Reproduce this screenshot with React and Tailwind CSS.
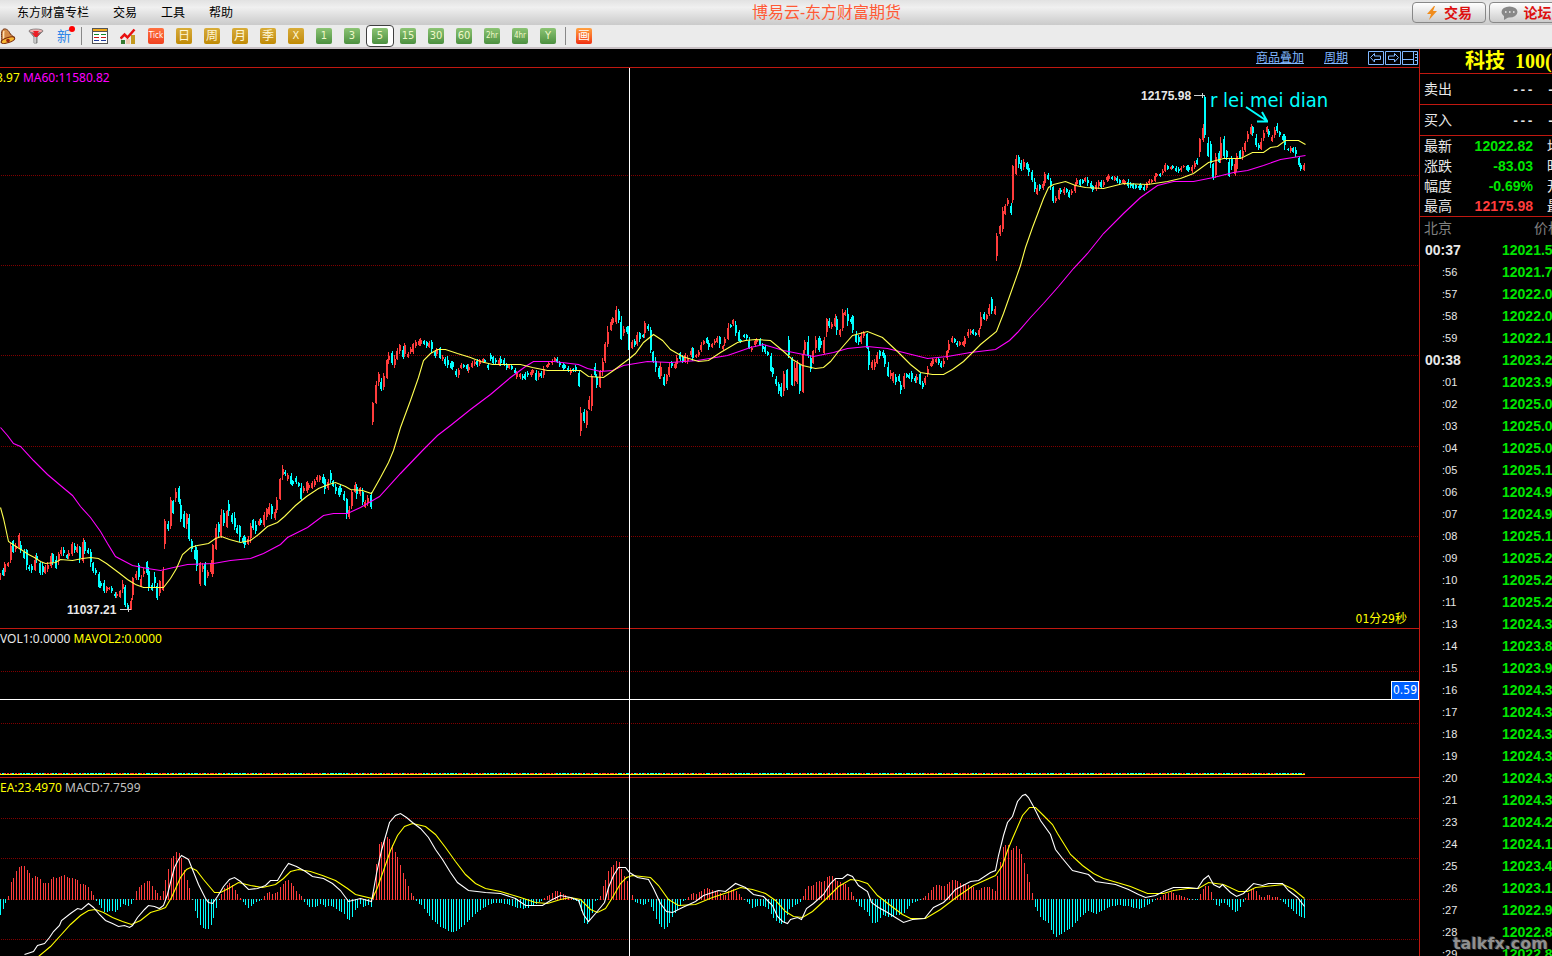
// Futures trading screen: menu, period toolbar, K-line chart with volume and MACD, quote sidebar.

import { useState } from "react";

const UP = "#ff3c3c";
const DOWN = "#00ffff";

// Each pair is where a candle starts and where it ends, in chart pixels. A smaller second value is a rising candle.
const SESSIONS = [
    "583,572 568,576 576,562 567,562 563,543 540,553 552,543 549,533 541,553 549,559 549,570 565,571 564,573 571,555 553,563 562,575 562,575 574,565 572,562 568,553 553,565 556,569 565,552 556,547 547,556 554,559 559,550 556,542 543,553 553,544 546,563 563,538 540,554 548,554 549,567 562,573 568,575 572,588 581,588 580,593 593,586 590,587 586,593 592,598 598,592 598,590 593,580 585,607 603,610 610,598 600,577 580,571 563,580 587,575 577,568 561,575 567,591 583,591 572,588 583,600 596,580 591,567",
    "549,519 521,531 529,497 500,514 502,488 486,504 499,522 511,528 529,513 514,541 539,552 545,560 547,571 586,562 572,563 562,586 578,570 574,560 577,544 550,524 522,537 538,509 510,526 528,510 500,516 513,524 512,530 525,534 525,542 536,544 535,548 545,536 543,523 519,530 521,534 526,519 518,525 527,512 520,508 515,503 504,519 520,509 513,497 500,478 480,465 470,476 481,473 473,485 480,486 476,484 482,487 483,500 493,486 493,481 490,483 489,481 487,479 482,475 482,475 474,484 477,494 490,479 470,483 480,487 484,494 486,497 485,495 491,501 498,519 519,506 509,490 493,482 484,499 496,487 488,505 508,500 506,495 492,509",
    "425,402 404,381 386,372 378,391 390,373 379,359 364,352 351,365 368,355 360,348 354,344 346,359 357,343 358,352 354,347 354,343 348,340 346,339 346,338 340,345 341,348 348,341 340,353 350,358 356,348 347,359 361,355 357,366 356,368 361,369 361,370 369,377 378,368 369,363 364,368 364,371 373,364 368,361 366,360 359,367 366,359 363,358 359,363 363,370 353,361 356,364 358,364 366,358 356,366 358,366 363,370 369,364 365,370 368,374 379,371 379,373 374,380 372,380 371,377 377,370 375,369 370,381 380,371 371,378 378,366 368,364 367,361 365,359 362,357 357,363 361,367 363,370 364,369 366,372 375,368 368,372 365,372 371,387",
    "436,407 409,423 428,410 410,396 411,374 363,377 374,388 388,370 376,358 363,342 347,326 331,319 325,317 324,306 309,323 316,340 336,326 326,334 326,350 349,340 339,347 346,332 332,342 334,338 338,321 324,331 327,353 351,363 357,372 366,379 379,362 374,386 384,374 377,363 361,368 369,362 368,355 352,361 355,363 363,353 364,355 357,348 347,361 358,354 357,350 352,342 345,340 337,344 340,350 348,343 345,339 343,336 336,348 350,345 346,337 340,323 324,328 326,319 321,336 330,342 339,343 334,338 334,340 337,349 352,346 347,339 344,338 338,346 343,352 345,354 351,356 353,372 367,377 376,386 382,394 383,397 396,371 369,390",
    "336,358 357,386 386,362 384,360 364,394 393,350 354,340 336,358 355,372 364,350 353,336 336,352 338,348 354,337 337,318 318,328 329,322 327,314 316,335 337,329 331,309 316,310 308,326 317,324 315,333 331,343 335,345 344,332 338,331 333,349 347,370 370,360 370,359 364,352 350,359 350,358 353,367 362,377 379,370 383,372 374,385 374,382 381,394 389,373 373,378 373,379 371,382 376,383 383,374 373,385 381,389 385,376 377,366 367,361 366,358 363,358 357,365 361,368 367,358 360,350 353,340 343,336 338,343 341,347 346,341 346,341 347,336 338,329 335,329 329,335 332,336 337,328 329,312 312,320 321,314 316,304 297,314 315,306",
    "261,233 236,225 232,207 215,204 206,198 203,215 203,165 175,155 155,168 160,171 170,159 162,170 164,176 170,182 178,192 195,185 184,191 190,181 186,172 173,180 178,190 186,203 203,196 200,188 188,194 195,187 188,193 190,198 195,189 193,182 186,178 179,186 179,184 182,177 177,186 181,189 185,192 191,182 189,180 180,188 187,180 182,176 181,174 176,180 181,176 176,183 179,184 184,179 185,180 179,188 182,188 183,189 184,189 184,190 183,190 185,191 190,182 185,179 183,179 182,173 177,173 173,177 175,169 172,163 165,170 170,166 165,169 166,172 167,173 172,166 168,165 165,171 165,172 173,165 169,161 158,165 157,138 142,124 95,138 137,157 141,168 163,180 178,153 151,163 163,137 136,158 150,160 158,177 156,170 176,159 172,153 150,159 160,147 152,141 142,131 135,124 126,136 134,147 143,150 150,138 141,130 134,126 129,137 142,135 138,127 123,133 131,137 134,141 134,150 148,151 153,146 147,153 147,157 156,167 163,171 171,163",
];

const MA20 =
    "0,507 3,518 5,527 8,541 14,545 22,550 28,554 34,557 40,561 45,563 55,562 60,559 72,560 82,558 90,557 98,558 106,563 118,572 127,579 135,584 143,587 163,587 170,578 176,568 182,554 190,547 197,545 208,543 215,538 221,536 229,539 240,542 250,540 258,534 267,526 277,522 284,516 295,505 306,496 318,488 328,484 335,482 345,486 350,489 362,490 371,493 380,477 388,462 393,450 400,427 410,400 418,377 423,360 430,353 437,349 445,349 457,353 470,357 480,361 492,364 507,364 520,364 532,367 547,370 580,370 588,376 603,377 613,370 629,358 635,353 643,342 653,334 662,340 670,349 682,356 698,361 708,360 720,352 737,342 745,340 755,339 770,340 782,350 792,359 802,365 815,368 823,367 830,361 838,351 852,335 867,331 882,337 897,351 910,364 920,372 932,374 943,374 952,369 963,361 980,344 996,331 1003,313 1009,296 1020,265 1025,247 1032,227 1043,198 1048,187 1053,184 1065,181 1075,185 1085,187 1103,188 1123,183 1147,184 1167,181 1180,178 1193,173 1208,162 1223,158 1240,158 1252,152 1263,152 1270,147 1277,146 1285,140 1298,140 1305,144";

const MA60 =
    "0,427 7,435 13,443 20,446 33,460 47,474 60,485 72,495 80,506 90,517 100,531 107,543 115,556 132,565 147,568 160,570 173,567 187,564 213,563 230,560 250,558 263,553 280,544 287,537 307,527 323,515 333,513 347,513 360,507 379,496 400,473 422,450 437,435 450,425 470,409 490,394 510,377 525,366 533,361 553,361 578,364 587,368 600,371 612,370 623,365 647,361 670,362 697,360 727,355 750,347 763,344 773,347 783,350 813,356 833,352 847,348 867,346 887,348 907,353 927,358 947,356 970,352 995,349 1009,340 1017,332 1030,317 1043,303 1058,286 1073,268 1087,253 1103,233 1123,213 1140,197 1157,185 1173,181 1193,181 1213,177 1233,172 1247,170 1263,165 1280,159 1305,155";

const DIF =
    "24,954 33,951 37,945 44,943 49,937 53,931 59,925 61,920 70,913 77,908 81,909 88,903 93,907 99,914 105,920 112,923 118,926 124,925 129,927 132,925 137,917 144,909 148,905 154,906 159,908 163,905 167,894 171,878 174,867 178,859 181,855 188,859 192,869 198,884 205,898 208,902 212,903 217,896 223,886 229,879 234,877 240,881 248,889 257,888 265,885 270,880 277,880 283,870 288,863 296,866 305,871 312,876 323,878 332,883 340,890 348,901 360,898 371,901 376,873 381,850 385,836 389,822 395,815 400,813 406,817 412,822 420,828 428,837 435,849 442,859 450,872 457,882 468,890 485,892 500,893 515,898 525,905 542,905 550,900 560,895 570,897 578,900 583,914 588,921 595,913 600,907 604,902 608,887 613,875 618,867 625,867 629,872 637,877 648,879 653,888 660,903 666,911 672,912 682,907 695,901 703,895 718,890 725,891 735,883 745,887 753,894 763,896 772,905 777,916 782,921 787,923 790,919 797,917 801,919 806,908 813,903 823,894 830,883 835,878 842,878 847,874 852,876 858,885 867,891 871,902 878,907 887,912 895,917 903,922 912,919 924,918 933,907 943,902 947,898 955,889 970,881 978,880 990,872 995,870 998,855 1003,835 1007,822 1012,816 1017,801 1022,795 1025,794 1028,797 1033,806 1040,820 1050,834 1055,849 1062,858 1072,870 1088,874 1095,881 1115,884 1128,889 1138,894 1145,897 1155,895 1163,891 1173,887 1188,887 1197,888 1203,879 1208,875 1213,884 1219,887 1222,884 1230,892 1236,896 1243,893 1253,883 1262,885 1268,883 1282,883 1288,890 1297,897 1304,906";

const DEA =
    "38,956 50,946 60,935 70,924 80,915 88,910 95,909 103,912 112,917 122,921 131,924 140,920 150,912 160,909 165,907 171,897 180,877 186,869 190,867 196,870 203,879 214,892 220,892 228,888 238,882 250,885 262,887 275,884 283,878 290,871 298,869 310,871 322,875 335,880 347,888 355,894 372,898 377,887 383,870 390,850 397,835 404,826 412,823 425,826 435,834 445,847 455,861 465,874 475,883 485,888 500,891 520,897 535,902 547,903 560,899 570,897 580,899 590,909 597,912 605,908 612,897 620,883 626,877 632,875 650,877 658,885 668,899 678,905 695,904 712,897 730,891 740,887 752,889 765,893 775,900 785,911 793,916 802,917 812,911 825,899 838,886 850,879 858,880 867,883 877,895 890,905 902,914 910,918 925,918 940,909 957,896 973,885 995,875 1002,865 1007,850 1012,838 1022,815 1029,807 1035,807 1043,815 1052,824 1057,833 1070,854 1082,865 1093,873 1103,878 1130,886 1147,893 1163,893 1173,890 1187,888 1198,888 1208,882 1223,884 1238,891 1247,891 1255,887 1283,884 1293,889 1304,898";

// MACD histogram: x and bar height, positive is above the zero line
const MACD_BARS =
    "0,-15 3,-9 6,0 9,5 11,17 16,28 20,33 24,33 29,26 32,21 35,23 38,22 43,16 48,16 53,22 57,21 62,24 65,24 70,20 73,21 77,19 81,13 83,15 88,12 92,6 94,1 97,-2 102,-10 105,-13 110,-10 116,-12 118,-9 123,-4 128,-6 132,-3 134,3 137,10 142,15 148,19 153,12 158,4 161,3 163,8 166,24 168,30 171,41 174,44 177,48 180,45 182,37 185,25 187,19 190,7 193,-3 198,-22 201,-26 206,-30 209,-28 211,-25 217,-5 220,3 223,10 229,16 233,13 237,5 241,0 246,-6 248,-8 252,-5 257,-1 262,0 265,4 269,7 273,4 277,7 281,13 286,19 289,19 292,14 297,7 302,2 305,-4 309,-7 315,-7 321,-4 325,-7 331,-6 337,-10 342,-13 345,-15 347,-19 350,-20 353,-15 355,-10 360,-4 363,-7 367,-5 372,-7 374,20 377,43 379,55 382,58 384,60 387,62 390,59 393,52 400,34 406,17 412,4 416,-1 423,-7 430,-18 440,-27 448,-31 452,-32 457,-31 460,-28 467,-22 477,-12 487,-6 493,-3 500,-3 507,-4 517,-8 523,-9 530,-7 537,-3 543,0 550,5 555,8 560,7 568,2 573,0 579,-3 582,-15 584,-23 587,-24 591,-17 593,-9 595,-1 598,0 601,5 603,13 608,28 612,33 616,38 619,37 622,27 625,21 628,16 630,8 633,2 635,-2 643,-5 649,-2 652,-9 657,-21 662,-28 665,-30 668,-25 672,-17 678,-9 683,-1 687,1 692,6 697,5 702,9 707,11 713,8 718,8 724,3 728,8 733,10 737,7 741,2 747,-2 752,-8 757,-6 763,-6 768,-9 773,-18 777,-22 782,-25 785,-22 789,-9 795,-5 801,-2 803,3 806,13 812,13 817,18 823,17 828,23 833,23 838,17 843,16 847,14 851,7 854,1 857,-4 862,-8 867,-12 872,-23 876,-23 883,-15 890,-18 895,-15 900,-15 905,-12 910,-4 917,-1 923,1 930,8 935,14 945,13 953,20 962,15 972,13 977,8 983,12 990,12 995,8 998,30 1001,40 1003,52 1006,55 1008,54 1011,49 1014,52 1017,53 1020,48 1025,33 1030,13 1033,3 1035,-7 1041,-19 1048,-23 1053,-34 1056,-37 1062,-33 1072,-27 1080,-17 1088,-11 1095,-14 1102,-11 1110,-7 1117,-5 1127,-6 1138,-9 1145,-7 1153,-1 1162,3 1170,7 1177,4 1185,2 1190,0 1198,0 1201,7 1206,14 1209,13 1212,4 1214,-4 1219,-6 1222,-1 1227,-5 1233,-11 1236,-13 1241,-5 1243,-2 1246,3 1252,11 1255,9 1262,1 1268,5 1273,1 1276,3 1282,-1 1286,-5 1293,-11 1298,-16 1302,-18 1305,-18";

const parsePairs = (text) => text.split(" ").map((pair) => pair.split(",").map(Number));

const STEP = 8 / 3;
const candles = SESSIONS.flatMap(parsePairs).map(([start, end], i) => {
    const high = Math.min(start, end);
    const low = Math.max(start, end);
    const limit = Math.floor((low - high) * 0.35);
    return {
        x: Math.round(i * STEP - 1),
        high,
        low,
        bodyTop: high + Math.min([1, 4, 2, 6, 3][i % 5], limit),
        bodyBottom: low - Math.min([3, 1, 5, 2][i % 4], limit),
        color: end < start ? UP : DOWN,
    };
});

const barPoints = parsePairs(MACD_BARS);

function barHeight(x) {
    const next = barPoints.findIndex((p) => p[0] >= x);
    if (next <= 0) return next === 0 ? barPoints[0][1] : barPoints[barPoints.length - 1][1];
    const [x0, y0] = barPoints[next - 1];
    const [x1, y1] = barPoints[next];
    return Math.round(y0 + ((y1 - y0) * (x - x0)) / (x1 - x0));
}

function GridLines({ rows }) {
    return rows.map((y) => (
        <line key={y} x1="1" x2="100%" y1={y + 0.5} y2={y + 0.5} stroke="#800000" strokeDasharray="1 1" />
    ));
}

function Curve({ points, color }) {
    return <polyline points={points} fill="none" stroke={color} strokeWidth="1.1" transform="translate(0.5 0.5)" shapeRendering="auto" />;
}

function PricePanel() {
    return (
        <section className="relative h-[561px] shrink-0 border-b border-[#c01810]">
            <svg className="block h-full w-full" shapeRendering="crispEdges">
                <g transform="translate(0 -68)">
                    <GridLines rows={[175, 265, 355, 446, 536]} />
                    {candles.map((c, i) => (
                        <g key={i} fill={c.color}>
                            <rect x={c.x} y={c.bodyTop} width="2" height={c.bodyBottom - c.bodyTop} />
                            <rect x={c.x + (i % 2)} y={c.high} width="1" height={c.low - c.high} />
                        </g>
                    ))}
                    <Curve points={MA60} color="#ff00ff" />
                    <Curve points={MA20} color="#ffff50" />
                    <g fill="#e8e8e8" className="font-['Liberation_Sans',sans-serif] text-xs font-bold">
                        <text x="67" y="614">11037.21</text>
                        <text x="1141" y="100">12175.98</text>
                    </g>
                    <path d="M120 609.500h11M128.500 607v5M1194 95.500h11M1202.500 93v5" stroke="#d0d0d0" />
                    <text x="1210" y="107" fill="#00ffff" className="font-['DejaVu_Sans_Condensed','DejaVu_Sans',sans-serif] text-xl">r lei mei dian</text>
                    <path d="M1246 107l21 14M1257 121.500h11M1262 112l5 9" stroke="#00ffff" strokeWidth="2" shapeRendering="auto" />
                </g>
            </svg>
            <p className="absolute top-px -left-1 font-['Noto_Sans',sans-serif] text-xs leading-[18px] whitespace-pre">
                <span className="text-[#ffff00]">3.97</span> <span className="text-[#ff00ff]">MA60:11580.82</span>
            </p>
            <p className="absolute right-3 bottom-0 text-xs leading-[18px] text-[#ffff00]">01分29秒</p>
        </section>
    );
}

function VolumePanel() {
    return (
        <section className="relative h-[149px] shrink-0 border-b border-[#c01810]">
            <svg className="block h-full w-full" shapeRendering="crispEdges">
                <g transform="translate(0 -629)">
                    <GridLines rows={[671, 723]} />
                    {candles.map((c, i) => (
                        <rect key={i} x={c.x} y="773" width="2" height="1" fill={c.color} />
                    ))}
                    <rect x="0" y="774" width="1305" height="1" fill="#ffff00" />
                </g>
            </svg>
            <p className="absolute top-px left-0 font-['Noto_Sans',sans-serif] text-xs leading-[18px]">
                <span className="text-[#e8e8e8]">VOL1:0.0000</span> <span className="text-[#ffff00]">MAVOL2:0.0000</span>
            </p>
        </section>
    );
}

function MacdPanel() {
    return (
        <section className="relative min-h-0 flex-1">
            <svg className="absolute inset-0 h-full w-full" shapeRendering="crispEdges">
                <g transform="translate(0 -778)">
                    <GridLines rows={[818, 858, 899, 939]} />
                    {candles.map((c, i) => {
                        const h = barHeight(c.x + 1);
                        return <rect key={i} x={c.x + 1} y={h > 0 ? 899 - h : 899} width="1" height={Math.abs(h) + 1} fill={h > 0 ? UP : DOWN} />;
                    })}
                    <Curve points={DEA} color="#ffff00" />
                    <Curve points={DIF} color="#ffffff" />
                </g>
            </svg>
            <p className="absolute top-px left-0 font-['Noto_Sans',sans-serif] text-xs leading-[18px]">
                <span className="text-[#ffff00]">EA:23.4970</span> <span className="text-[#c0c0c0]">MACD:7.7599</span>
            </p>
        </section>
    );
}

function BellIcon() {
    return (
        <svg width="16" height="16" viewBox="0 0 16 16">
            <path d="M3 1.500c2-1.500 5 0 6.500 3 1 2 3 4 5.500 5L1 14.500c1-2 .8-4 .6-7C1.500 4.500 1.600 2.500 3 1.500z" fill="#d58a45" stroke="#6b2a0c" />
            <path d="M4 3c-1 2 0 5-.5 8" fill="none" stroke="#ffe0b0" strokeWidth="1.500" />
            <ellipse cx="8" cy="12.200" rx="7" ry="2.500" transform="rotate(-18 8 12.200)" fill="#f7b733" stroke="#7d2e0a" />
            <circle cx="8" cy="12.500" r="1.800" fill="#a02810" />
        </svg>
    );
}

function FunnelIcon() {
    return (
        <svg width="16" height="16" viewBox="0 0 16 16">
            <path d="M1 3l5 6v6h3V9l6-6z" fill="#a9a9a9" stroke="#6b6b6b" strokeWidth="0.800" />
            <path d="M3 4l4 5h2l4-5z" fill="#ee1c24" />
            <ellipse cx="8" cy="3" rx="7" ry="2" fill="#f1b0b0" stroke="#777" strokeWidth="0.800" />
            <path d="M5 3h6l-2 3H7z" fill="#ee1c24" />
            <path d="M7 9v6" stroke="#eee" />
        </svg>
    );
}

function NewsIcon() {
    return (
        <span className="relative text-sm leading-4 text-[#2f86e8]">
            新
            <span className="absolute -top-0.5 -right-1 size-1.5 rounded-full bg-[#ff0000]" />
        </span>
    );
}

function TableIcon() {
    return (
        <svg width="16" height="16" viewBox="0 0 16 16" shapeRendering="crispEdges">
            <rect x="0.500" y="0.500" width="15" height="15" fill="#fff" stroke="#555" />
            <rect x="1" y="1" width="14" height="2" fill="#f0a818" />
            <path d="M1 3.500h14" stroke="#555" />
            <path d="M2 6.500h5M9 6.500h5" stroke="#118a2a" />
            <path d="M2 9.500h5M9 9.500h5" stroke="#d01818" />
            <path d="M2 12.500h5M9 12.500h5" stroke="#203a9a" />
        </svg>
    );
}

function TrendIcon() {
    return (
        <svg width="16" height="16" viewBox="0 0 16 16">
            <path d="M1 12h4v4H1z" fill="#357a30" />
            <path d="M6 11h4v5H6z" fill="#f0c8b0" />
            <path d="M11 7h4v9h-4z" fill="#c49a20" />
            <path d="M0.500 10.500l4-4 3 3 7-8" fill="none" stroke="#e81010" strokeWidth="2.500" />
        </svg>
    );
}

const gold = "from-[#d8ac38] to-[#c08a00] text-[#fff8d8]";
const green = "from-[#8cc474] to-[#4c9040] text-[#f0f8c8]";
const PERIODS = [
    { label: "Tick", tone: "from-[#ff7040] to-[#f04020] text-white", size: "text-[8px]" },
    { label: "日", tone: gold, size: "text-xs" },
    { label: "周", tone: gold, size: "text-xs" },
    { label: "月", tone: gold, size: "text-xs" },
    { label: "季", tone: gold, size: "text-xs" },
    { label: "X", tone: gold, size: "text-[11px]" },
    { label: "1", tone: green, size: "text-[11px]" },
    { label: "3", tone: green, size: "text-[11px]" },
    { label: "5", tone: green, size: "text-[11px]" },
    { label: "15", tone: green, size: "text-[11px]" },
    { label: "30", tone: green, size: "text-[11px]" },
    { label: "60", tone: green, size: "text-[11px]" },
    { label: "2hr", tone: green, size: "text-[8px]" },
    { label: "4hr", tone: green, size: "text-[8px]" },
    { label: "Y", tone: green, size: "text-[11px]" },
];

function ToolButton({ label, children }) {
    return (
        <button type="button" aria-label={label} className="flex h-[22px] w-7 shrink-0 items-center justify-center">
            {children}
        </button>
    );
}

function Separator() {
    return <span className="mr-1 ml-[3px] h-[18px] w-px shrink-0 bg-[#888888]" />;
}

function Toolbar() {
    const [period, setPeriod] = useState("5");
    return (
        <div className="-ml-1.5 flex h-6 shrink-0 items-center border-b-2 border-[#c8c0c4] bg-[#ebebeb]">
            <ToolButton label="提醒"><BellIcon /></ToolButton>
            <ToolButton label="筛选"><FunnelIcon /></ToolButton>
            <ToolButton label="新闻"><NewsIcon /></ToolButton>
            <Separator />
            <ToolButton label="报价"><TableIcon /></ToolButton>
            <ToolButton label="走势"><TrendIcon /></ToolButton>
            {PERIODS.map((p) => (
                <button
                    key={p.label}
                    type="button"
                    aria-pressed={p.label === period}
                    onClick={() => setPeriod(p.label)}
                    className={`flex h-[22px] w-7 shrink-0 items-center justify-center ${p.label === period ? "rounded border border-[#404040] bg-white" : ""}`}
                >
                    <span className={`flex size-4 items-center justify-center rounded-xs bg-linear-to-b leading-4 ${p.tone} ${p.size}`}>{p.label}</span>
                </button>
            ))}
            <Separator />
            <ToolButton label="画线">
                <span className="flex size-4 items-center justify-center rounded-xs bg-linear-to-b from-[#ffa040] to-[#f02810] text-xs leading-4 text-white">画</span>
            </ToolButton>
        </div>
    );
}

const headerButton = "flex h-[21px] w-[74px] shrink-0 items-center justify-center gap-1.5 rounded border border-[#888888] bg-linear-to-b from-white to-[#cccccc] text-sm font-bold text-[#dd1010]";

function MenuBar() {
    return (
        <header className="flex h-[25px] shrink-0 items-center overflow-hidden bg-linear-to-b from-[#e2e2e2] via-[#f0f0f0] via-30% to-[#cacaca]">
            <nav className="flex gap-6 pl-[17px] text-xs text-black">
                <a href="#column">东方财富专栏</a>
                <a href="#trade">交易</a>
                <a href="#tools">工具</a>
                <a href="#help">帮助</a>
            </nav>
            <h1 className="flex-1 pl-2 text-center text-base leading-6 text-[#ff5a36]">博易云-东方财富期货</h1>
            <div className="flex w-[140px] gap-[3px]">
                <button type="button" className={headerButton}>
                    <svg width="12" height="14" viewBox="0 0 12 14">
                        <path d="M8 0L1 8h4l-2 6 8-9H7l2-5z" fill="#f08c1c" />
                    </svg>
                    交易
                </button>
                <button type="button" className={headerButton}>
                    <svg width="17" height="14" viewBox="0 0 17 14">
                        <ellipse cx="8.500" cy="6" rx="8" ry="5.500" fill="#888" />
                        <path d="M3 9l0 5 5-3z" fill="#888" />
                        <path d="M4 6h1.500M8 6h1.500M12 6h1.500" stroke="#eee" strokeWidth="1.500" />
                    </svg>
                    论坛
                </button>
            </div>
        </header>
    );
}

function ChartBar() {
    return (
        <div className="flex h-[19px] shrink-0 items-center justify-end border-b border-[#c01810] text-xs text-[#80b8ff]">
            <a href="#overlay" className="mr-5 underline">商品叠加</a>
            <a href="#period" className="mr-5 underline">周期</a>
            <svg width="51" height="15" viewBox="0 0 51 15" fill="none" stroke="#80b8ff">
                <path d="M0.500 0.500h15v13h-15zM17.500 0.500h15v13h-15zM34.500 0.500h15v13h-15z" />
                <path d="M2.500 6.500l4-4v2.500h6v3.500h-6v2.500zM30.500 6.500l-4-4v2.500h-6v3.500h6v2.500zM34.500 8.500h11M45.500 0.500v13M47 3.500h2M47 6.500h2M47 9.500h2" />
            </svg>
        </div>
    );
}

const QUOTES = [
    { name: "最新", value: "12022.82", tone: "text-[#00e600]", next: "均价" },
    { name: "涨跌", value: "-83.03", tone: "text-[#00e600]", next: "昨收" },
    { name: "幅度", value: "-0.69%", tone: "text-[#00e600]", next: "开盘" },
    { name: "最高", value: "12175.98", tone: "text-[#ff3c3c]", next: "最低" },
];

const TICKS = [
    ["00:37", "12021.5"], [":56", "12021.7"], [":57", "12022.0"], [":58", "12022.0"], [":59", "12022.1"],
    ["00:38", "12023.2"], [":01", "12023.9"], [":02", "12025.0"], [":03", "12025.0"], [":04", "12025.0"],
    [":05", "12025.1"], [":06", "12024.9"], [":07", "12024.9"], [":08", "12025.1"], [":09", "12025.2"],
    [":10", "12025.2"], [":11", "12025.2"], [":13", "12024.3"], [":14", "12023.8"], [":15", "12023.9"],
    [":16", "12024.3"], [":17", "12024.3"], [":18", "12024.3"], [":19", "12024.3"], [":20", "12024.3"],
    [":21", "12024.3"], [":23", "12024.2"], [":24", "12024.1"], [":25", "12023.4"], [":26", "12023.1"],
    [":27", "12022.9"], [":28", "12022.8"], [":29", "12022.8"],
];

function Sidebar() {
    return (
        <aside className="w-[133px] shrink-0 overflow-hidden border-l border-[#c01810] whitespace-nowrap text-[#e8e8e8]">
            <h2 className="flex h-[25px] items-center gap-2.5 border-b border-[#c01810] pl-[45px] font-['Liberation_Serif','Noto_Sans_CJK_SC',serif] text-xl leading-6 font-bold text-[#ffff00]">
                <span>科技</span>
                <span>100(</span>
            </h2>
            {["卖出", "买入"].map((side) => (
                <p key={side} className="flex h-[31px] items-center border-b border-[#c01810] pl-1 text-sm">
                    <span className="w-[88px] shrink-0">{side}</span>
                    <span className="w-[35px] shrink-0 pt-1 font-['Liberation_Mono',monospace] text-xs font-bold">---</span>
                    <span className="shrink-0 pt-1 font-['Liberation_Mono',monospace] text-xs font-bold">---</span>
                </p>
            ))}
            <table className="w-[180px] table-fixed border-b border-[#c01810] text-sm leading-5">
                <tbody>
                    {QUOTES.map((q) => (
                        <tr key={q.name} className="h-5">
                            <th className="w-9 p-0 pl-1 text-left font-normal">{q.name}</th>
                            <td className={`w-[77px] p-0 text-right font-['Liberation_Sans',sans-serif] font-bold ${q.tone}`}>{q.value}</td>
                            <td className="p-0 pl-3.5">{q.next}</td>
                        </tr>
                    ))}
                </tbody>
            </table>
            <table className="w-[180px] table-fixed">
                <thead>
                    <tr className="h-[22px] text-sm leading-5 text-[#808080]">
                        <th className="w-[82px] p-0 pl-1 text-left font-normal">北京</th>
                        <th className="p-0 pl-8 text-left font-normal">价格</th>
                    </tr>
                </thead>
                <tbody className="font-['Liberation_Sans',sans-serif]">
                    {TICKS.map(([time, price]) => (
                        <tr key={time} className="h-[22px]">
                            <td className={`p-0 leading-5 ${time.length > 3 ? "pl-[5px] text-sm font-bold" : "pl-[22px] text-[11px]"}`}>{time}</td>
                            <td className="p-0 text-sm leading-5 font-bold text-[#00e600]">{price}</td>
                        </tr>
                    ))}
                </tbody>
            </table>
        </aside>
    );
}

export default function App() {
    return (
        <div className="relative flex h-screen flex-col overflow-hidden bg-black font-['DejaVu_Sans_Condensed','DejaVu_Sans','Noto_Sans_CJK_SC',sans-serif]">
            <MenuBar />
            <Toolbar />
            <div className="flex min-h-0 flex-1">
                <main className="relative flex min-w-0 flex-1 flex-col overflow-hidden">
                    <ChartBar />
                    <PricePanel />
                    <VolumePanel />
                    <MacdPanel />
                    {/* Crosshair and the value it reads */}
                    <span className="absolute top-[19px] bottom-0 left-[629px] w-px bg-white" />
                    <span className="absolute top-[650px] left-0 h-px w-full bg-white" />
                    <span className="absolute top-[632px] right-0 border border-white bg-[#0060ff] px-px text-xs leading-[17px] text-white">0.59</span>
                </main>
                <Sidebar />
            </div>
            <span className="absolute right-1 bottom-0.5 font-['DejaVu_Sans',sans-serif] text-base leading-5 font-bold text-[#909090] [text-shadow:1px_1px_0_#222,-1px_-1px_0_#333]">talkfx.com</span>
        </div>
    );
}
